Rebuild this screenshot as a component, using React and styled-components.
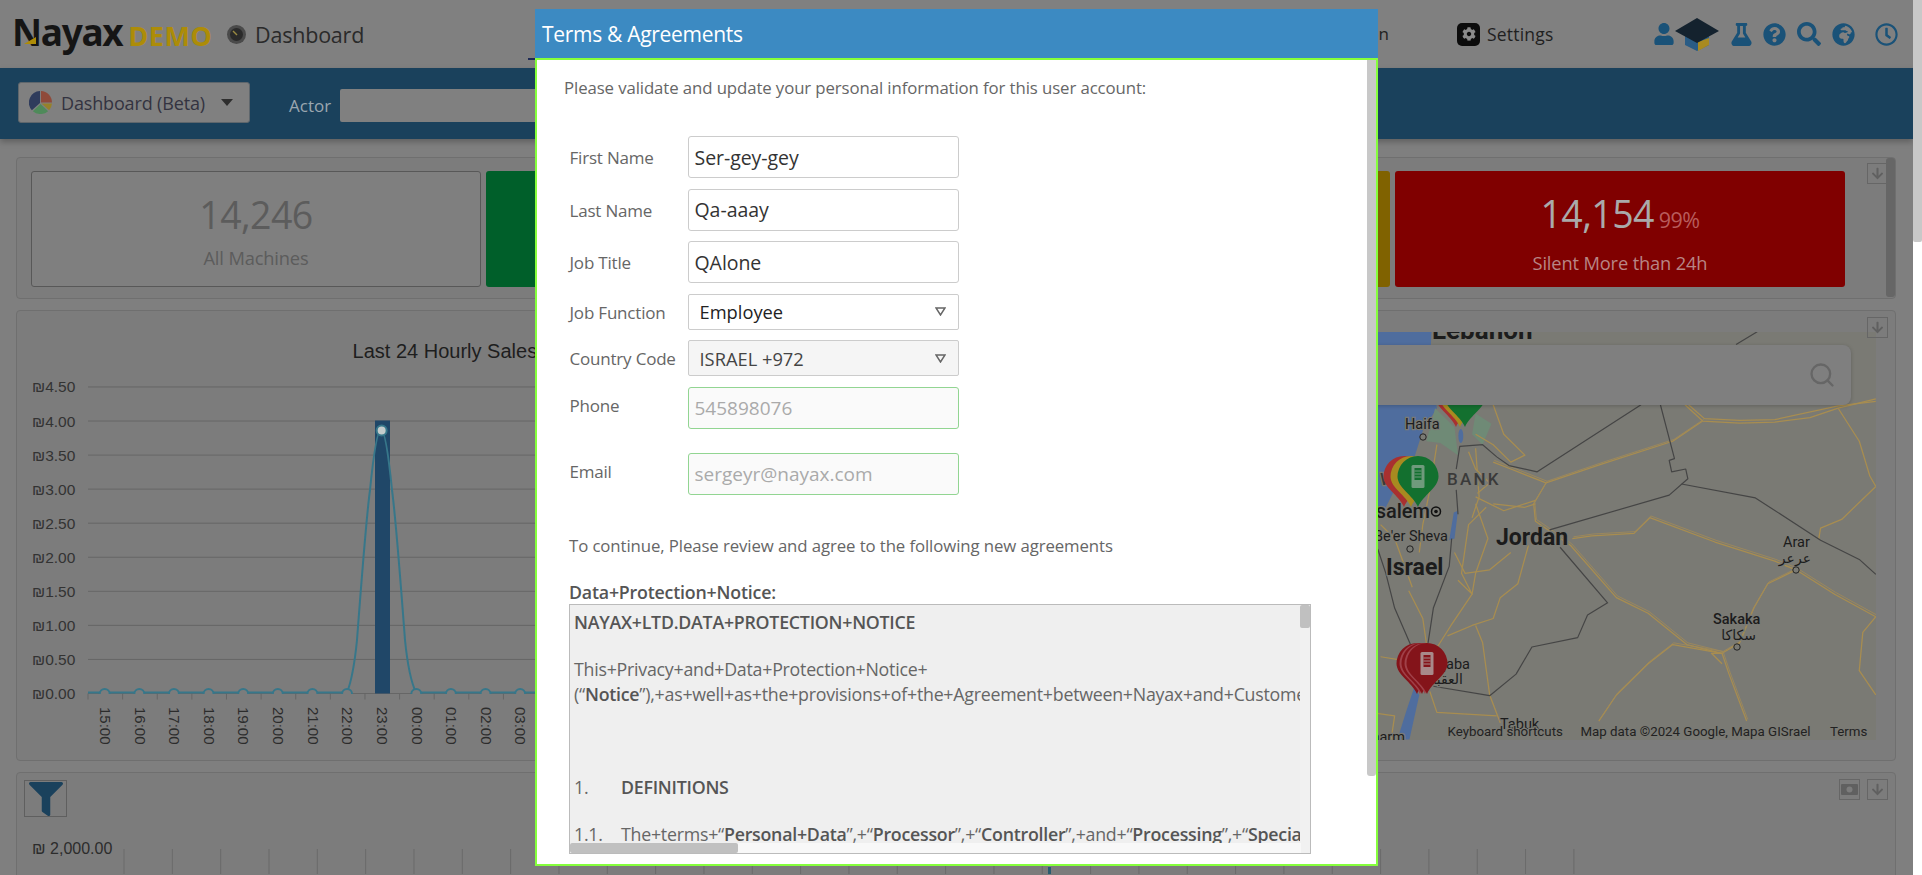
import styled, { createGlobalStyle } from "styled-components";
import {
  FaUser,
  FaFlask,
  FaQuestionCircle,
  FaSearch,
  FaGlobeAfrica,
  FaRegClock,
  FaCog,
  FaArrowDown,
  FaFilter,
} from "react-icons/fa";
import { Search } from "lucide-react";

const UI_FONT = `"Open Sans", "Noto Sans", sans-serif`;
const CHART_FONT = `"Liberation Sans", "DejaVu Sans", sans-serif`;
const MAP_FONT = `Roboto, "DejaVu Sans", sans-serif`;

const GlobalStyle = createGlobalStyle`
  html, body {
    margin: 0;
    height: 875px;
    overflow: hidden;
    background: #fff;
  }
  * { box-sizing: border-box; }
`;

const Shell = styled.div`
  display: flex;
  width: 1922px;
  height: 875px;
  overflow: hidden;
  font-family: ${UI_FONT};
`;

const Page = styled.div`
  position: relative;
  width: 1913px;
  height: 875px;
  background: #7f7f7f;
  overflow: hidden;
`;

const PageScrollbar = styled.div`
  width: 9px;
  height: 875px;
  background: #fff;
`;

const PageThumb = styled.div`
  height: 242px;
  background: #c8c8c8;
  border-radius: 0 0 2px 2px;
`;

/* header */
const Header = styled.header`
  display: flex;
  align-items: center;
  height: 68px;
  padding-left: 12px;
  background: #808080;
`;

const Brand = styled.div`
  position: relative;
  display: flex;
  align-items: baseline;
  width: 215px;
  height: 40px;
  margin-top: -4px;
`;

const BrandName = styled.span`
  font-family: "Noto Sans", sans-serif;
  font-size: 37px;
  line-height: 40px;
  font-weight: 700;
  letter-spacing: -1.3px;
  color: #151515;
`;

const BrandDemo = styled.span`
  margin-left: 6px;
  font-family: "Noto Sans", sans-serif;
  font-size: 27px;
  line-height: 40px;
  font-weight: 700;
  letter-spacing: 0.6px;
  color: #ad8c08;
`;

const BrandMark = styled.svg`
  position: absolute;
  left: 12px;
  top: 25px;
`;

const PageTitle = styled.div`
  display: flex;
  align-items: center;
  gap: 9px;
  width: 301px;
  font-size: 21.5px;
  letter-spacing: -0.2px;
  color: #2a2a2a;
`;

const NavTab = styled.div`
  display: flex;
  align-items: center;
  justify-content: flex-end;
  flex: none;
  height: 60px;
  width: ${(p) => p.$width}px;
  margin-top: -8px;
  padding-top: 8px;
  border-bottom: 2px solid ${(p) => (p.$active ? "#1d2a55" : "transparent")};
  font-size: 17px;
  color: #222;
`;

const SettingsLink = styled.div`
  display: flex;
  align-items: center;
  gap: 7px;
  margin-left: 68px;
  font-size: 17.5px;
  letter-spacing: 0.2px;
  color: #1f1f1f;
`;

const SettingsIcon = styled.span`
  display: flex;
  align-items: center;
  justify-content: center;
  width: 23px;
  height: 23px;
  border-radius: 5px;
  background: #0c0c0c;
  color: #8a8a8a;
  font-size: 14px;
`;

const HeaderIcons = styled.div`
  display: flex;
  align-items: center;
  margin-left: 99px;
  color: #1a5278;
`;

const HeaderIcon = styled.span`
  display: flex;
  font-size: ${(p) => p.$size}px;
  margin-left: ${(p) => p.$gap}px;
`;

/* blue toolbar */
const Toolbar = styled.div`
  display: flex;
  align-items: center;
  height: 71px;
  padding: 0 0 2px 18px;
  background: #1a415c;
  box-shadow: 0 3px 6px rgba(0, 0, 0, 0.25);
`;

const ViewSelect = styled.div`
  display: flex;
  align-items: center;
  width: 232px;
  height: 41px;
  padding-left: 10px;
  background: #808080;
  border: 1px solid #5e666c;
  border-radius: 3px;
  font-size: 18px;
  letter-spacing: -0.15px;
  color: #333340;
`;

const ViewLabel = styled.span`
  margin-left: 9px;
  flex: 1;
`;

const Caret = styled.span`
  width: 0;
  height: 0;
  margin-right: 16px;
  border-left: 6px solid transparent;
  border-right: 6px solid transparent;
  border-top: 7px solid #2e2e2e;
`;

const ActorLabel = styled.span`
  margin: 6px 0 0 39px;
  font-size: 17px;
  color: #9aa7b0;
`;

const ActorInput = styled.div`
  width: 260px;
  height: 33px;
  margin: 5px 0 0 9px;
  background: #808080;
  border-radius: 2px;
`;

/* dashboard panels */
const Main = styled.main`
  display: flex;
  flex-direction: column;
  gap: 11px;
  padding: 18px 17px 0 16px;
`;

const Panel = styled.section`
  position: relative;
  flex: none;
  height: ${(p) => p.$height}px;
  background: #7c7c7c;
  border: 1px solid #6f6f6f;
  border-radius: 4px;
`;

const StatPanel = styled(Panel)`
  display: grid;
  grid-template-columns: repeat(4, 450px);
  column-gap: 4.67px;
  padding: 13px 0 0 14px;
`;

const StatCard = styled.div`
  display: flex;
  flex-direction: column;
  align-items: center;
  height: 116px;
  padding-top: 20px;
  background: ${(p) => p.$bg};
  border: ${(p) => (p.$outlined ? "1px solid #585858" : "none")};
  border-radius: 3px;
`;

const StatValue = styled.div`
  font-size: 37.5px;
  line-height: 46px;
  letter-spacing: -0.6px;
  color: ${(p) => p.$color};
`;

const StatPercent = styled.span`
  margin-left: 5px;
  font-size: 21.5px;
  color: #b85c5c;
`;

const StatLabel = styled.div`
  margin-top: 8px;
  font-size: 18.3px;
  line-height: 24px;
  letter-spacing: -0.15px;
  color: ${(p) => p.$color};
`;

const PanelScrollbar = styled.div`
  position: absolute;
  top: 0;
  bottom: 1px;
  right: 0;
  width: 9px;
  background: #666;
  border-radius: 3px;
`;

const IconButton = styled.div`
  position: absolute;
  top: ${(p) => p.$top}px;
  right: ${(p) => p.$right}px;
  display: flex;
  align-items: center;
  justify-content: center;
  width: 21px;
  height: 21px;
  border: 1px solid #666;
  color: #606060;
  font-size: 13px;
`;

const ChartPanel = styled(Panel)`
  display: flex;
`;

const ChartSvg = styled.svg`
  display: block;
  flex: none;
`;

const ChartText = styled.text`
  font-family: ${CHART_FONT};
  font-size: ${(p) => p.$size}px;
  fill: ${(p) => p.$color};
`;

const MapCell = styled.div`
  position: relative;
  flex: none;
  width: 916px;
  height: 408px;
  margin-top: 21px;
  overflow: hidden;
  background: #7a7a74;
`;

const MapSvg = styled.svg`
  display: block;
`;

const MapLabel = styled.text`
  font-family: ${MAP_FONT};
  font-size: ${(p) => p.$size}px;
  font-weight: ${(p) => p.$weight || 400};
  letter-spacing: ${(p) => p.$spacing || 0}px;
  fill: ${(p) => p.$color || "#1c1c1c"};
  stroke: #7a7a74;
  stroke-width: 2.5px;
  paint-order: stroke;
`;

const MapSearch = styled.div`
  position: absolute;
  top: 13px;
  right: 25px;
  display: flex;
  align-items: center;
  justify-content: flex-end;
  width: 560px;
  height: 60px;
  padding-right: 15px;
  background: #7f7f7f;
  border-radius: 8px;
  box-shadow: 0 1px 4px rgba(0, 0, 0, 0.2);
  color: #666;
`;

const FilterButton = styled.div`
  display: flex;
  align-items: center;
  justify-content: center;
  width: 43px;
  height: 37px;
  margin: 7px 0 0 7px;
  border: 1px solid #5f5f5f;
  color: #1a415c;
  font-size: 34px;
`;

/* modal */
const Modal = styled.div`
  position: absolute;
  left: 535px;
  top: 9px;
  width: 843px;
  height: 857px;
`;

const ModalHeader = styled.div`
  display: flex;
  align-items: center;
  height: 49px;
  padding-left: 7px;
  background: #3c8ac2;
  font-size: 21px;
  letter-spacing: -0.3px;
  color: #fff;
`;

const ModalBody = styled.div`
  position: relative;
  height: 808px;
  padding: 16px 0 0 27px;
  background: #fff;
  border: 2px solid #86ff3c;
  overflow: hidden;
  font-size: 16.8px;
  color: #666;
`;

const ModalThumb = styled.div`
  position: absolute;
  top: 0;
  right: 0;
  width: 9px;
  height: 716px;
  background: #c8c8c8;
  border-radius: 0 0 3px 3px;
`;

const BodyText = styled.div`
  height: 24px;
  line-height: 24px;
  letter-spacing: -0.1px;
  margin: ${(p) => p.$margin || "0"};
  white-space: nowrap;
`;

const Form = styled.div`
  display: flex;
  flex-direction: column;
  gap: 10.5px;
  margin: 36px 0 0 5.5px;
`;

const FormRow = styled.div`
  display: grid;
  grid-template-columns: 118px 271px;
  align-items: ${(p) => (p.$top ? "start" : "center")};
  margin-top: ${(p) => p.$offset || 0}px;
`;

const FieldLabel = styled.label`
  font-size: 17px;
  letter-spacing: -0.2px;
  line-height: 24px;
  padding-top: ${(p) => p.$pad || 2}px;
`;

const Field = styled.div`
  display: flex;
  align-items: center;
  justify-content: space-between;
  height: 42px;
  padding: 0 6px;
  background: #fff;
  border: 1px solid #ccc;
  border-radius: 3px;
  font-size: 19.5px;
  letter-spacing: -0.05px;
  color: #333;
`;

const LockedField = styled(Field)`
  background: #fafafa;
  border-color: #92d592;
  font-size: 19px;
  letter-spacing: 0;
  color: #aaa;
`;

const SelectField = styled(Field)`
  height: 36px;
  padding: 0 12px 0 11px;
  border-radius: 2px;
  background: ${(p) => (p.$disabled ? "#f5f5f5" : "#fff")};
  font-size: 18.3px;
  letter-spacing: 0;
  color: ${(p) => (p.$disabled ? "#444" : "#222")};
`;

const AgreementTitle = styled.div`
  height: 23px;
  line-height: 23px;
  margin: 23px 0 0 5px;
  font-size: 17.8px;
  font-weight: 600;
  letter-spacing: -0.2px;
  color: #555;
`;

const AgreementBox = styled.div`
  position: relative;
  width: 742px;
  height: 250px;
  margin-left: 5px;
  background: #efefef;
  border: 1px solid #bbb;
  overflow: hidden;
`;

const AgreementText = styled.div`
  width: 731px;
  height: 239px;
  padding: 5px 0 0 4px;
  overflow: hidden;
  white-space: nowrap;
  line-height: 25px;
  letter-spacing: -0.25px;
  font-size: 17.8px;
`;

const Para = styled.div`
  margin-bottom: ${(p) => p.$gap || 0}px;
`;

const Num = styled.span`
  display: inline-block;
  width: 47px;
`;

const Strong = styled.b`
  font-weight: 600;
  color: #555;
`;

const TrackV = styled.div`
  position: absolute;
  top: 0;
  right: 0;
  width: 10px;
  height: 100%;
  background: #f1f1f1;
`;

const ThumbV = styled.div`
  width: 100%;
  height: 23px;
  background: #c0c0c0;
  border-radius: 2px;
`;

const TrackH = styled.div`
  position: absolute;
  left: 0;
  bottom: 0;
  width: 731px;
  height: 10px;
  background: #f8f8f8;
`;

const ThumbH = styled.div`
  width: 168px;
  height: 100%;
  background: #c0c0c0;
  border-radius: 2px;
`;

const HOURS = ["15", "16", "17", "18", "19", "20", "21", "22", "23", "00", "01", "02", "03", "04", "05", "06", "07", "08", "09", "10", "11", "12", "13", "14"];
const PRICES = ["0.00", "0.50", "1.00", "1.50", "2.00", "2.50", "3.00", "3.50", "4.00", "4.50"];

const HourlyChart = () => {
  const base = 693.5;
  const stepY = 34.06;
  const stepX = 34.62;
  return (
    <ChartSvg width="943" height="449" viewBox="17 311 943 449">
      <defs>
        <clipPath id="plot">
          <rect x="80" y="380" width="880" height="314" />
        </clipPath>
      </defs>
      <ChartText x="352.6" y="358" $size={20} $color="#1e1e1e">
        Last 24 Hourly Sales
      </ChartText>
      {PRICES.map((v, i) => (
        <g key={v}>
          <line x1="88" x2="950" y1={base - i * stepY} y2={base - i * stepY} stroke="#666" />
          <ChartText x="32" y={base - i * stepY + 5.5} $size={15.5} $color="#333">
            ₪{v}
          </ChartText>
        </g>
      ))}
      {HOURS.map((h, i) => (
        <g key={h}>
          <line x1={88 + i * stepX} x2={88 + i * stepX} y1={base} y2={base + 6} stroke="#666" />
          <ChartText
            $size={15}
            $color="#2c2c2c"
            transform={`translate(${105 + i * stepX - 5} 707) rotate(90)`}
          >
            {h}:00
          </ChartText>
        </g>
      ))}
      <rect x="375" y="420.5" width="15" height="273" fill="#204768" />
      <g clipPath="url(#plot)">
        <path
          d="M88 692.5 H347 C352 680 355 660 357 640 C360 600 366 520 370 490 C373 460 377 430 381 430 C385 430 389 460 392 490 C396 520 402 600 405 640 C407 660 410 680 416 692.5 H950"
          fill="none"
          stroke="#37778a"
          strokeWidth="2"
        />
        {HOURS.map((h, i) => (
          <circle
            key={h}
            cx={104.7 + i * stepX}
            cy={i === 8 ? 430.4 : 694}
            r="5"
            fill={i === 8 ? "#c4cccc" : "#7c7c7c"}
            stroke="#37778a"
            strokeWidth="2"
          />
        ))}
      </g>
    </ChartSvg>
  );
};

const Pin = ({ x, top, fill, light }) => {
  const tip = top + 51;
  return (
    <g>
      <path
        d={`M${x} ${tip} C${x - 5} ${tip - 12} ${x - 20.5} ${top + 32} ${x - 20.5} ${top + 20.5} A20.5 20.5 0 1 1 ${x + 20.5} ${top + 20.5} C${x + 20.5} ${top + 32} ${x + 5} ${tip - 12} ${x} ${tip} Z`}
        fill={fill}
      />
      {light && (
        <g>
          <rect x={x - 6.5} y={top + 9} width="13" height="23" rx="1.5" fill={light} />
          <rect x={x - 3.5} y={top + 12} width="7" height="12" fill={fill} />
          <path d={`M${x - 3.5} ${top + 15} h7 M${x - 3.5} ${top + 18} h7 M${x - 3.5} ${top + 21} h7`} stroke={light} strokeWidth="1" />
        </g>
      )}
    </g>
  );
};

const ROADS = [
  "M895 215 L945 262 L1050 268 L1150 265 L1250 252 L1330 225 L1437 198",
  "M905 215 L950 255 L1050 260 L1150 258 L1330 218 L1437 205",
  "M945 262 L860 320 L660 385 L500 440 L400 400 L350 380",
  "M500 440 L465 500 L470 550 L570 620 L700 770 L790 815 L900 905 L1000 930 L1020 990 L1070 1125",
  "M575 600 L630 592 L750 585 L795 540 L980 610 L1150 665 L1210 690 L1320 760 L1437 825",
  "M1210 690 L1130 730 L1090 800 L1050 900 L1000 930 L860 905 L790 960 L700 1050 L650 1125",
  "M1275 600 L1280 570 L1340 545 L1437 450",
  "M300 480 L380 520 L470 490",
  "M300 500 L335 600 L300 700 L290 760 L230 850 L180 930",
  "M450 620 L420 730 L370 770 L350 830 L290 850 L220 880",
  "M300 850 L320 900 L340 1050 L370 1130",
  "M250 720 L290 760 L260 700 L280 560 L330 510",
  "M110 750 L150 830 L160 900",
  "M170 1040 L190 1100 L360 1110",
  "M60 1178 L70 1110 L0 1100",
  "M350 215 L380 300 L440 360 L400 380 L350 330 L300 300",
  "M1330 225 L1390 320 L1420 420 L1437 450",
  "M1437 825 L1400 870 L1390 980 L1437 1050",
  "M190 330 L170 460 L150 560 L140 640",
  "M300 340 L310 480 L290 540",
  "M1000 930 L970 930 L1000 960",
  "M30 940 L90 950",
  "M305 470 L340 440 L300 400 L280 350",
  "M240 640 L270 700 L340 690 L400 640",
  "M30 560 L70 600 L120 740",
  "M350 500 L440 510 L470 500",
];

const BORDERS = [
  "M1100 5 L1040 42",
  "M770 215 L475 408 L395 390 L360 365 L320 330 L255 335 L245 400",
  "M825 215 L865 370 L850 375 L857 408 L897 400 L903 428 L850 475 L510 575",
  "M885 443 L1095 483 L1280 605 L1390 660 L1437 703",
  "M540 625 L675 785 L618 820 L590 885 L460 912 L415 990 L340 1052 L180 1025",
  "M22 630 L45 700 L70 800 L115 905",
  "M245 460 L250 530 M232 600 L225 680 L180 800 L165 900",
];

const MapView = () => (
  <MapCell>
    <MapSvg width="916" height="408" viewBox="960 332 916 408">
      <rect x="960" y="332" width="916" height="408" fill="#7a7a74" />
      <g transform="translate(1370 330) scale(0.352 0.3476)">
        <path d="M0 0 L175 0 L170 100 L190 225 L150 290 L125 370 L85 430 L40 520 L0 560 Z" fill="#4f6d9e" />
        <path d="M185 225 L240 280 L250 360 L200 325 L160 320 Z M300 240 L345 270 L320 330 L290 300 Z" fill="#6f8a76" />
        <ellipse cx="258" cy="305" rx="7" ry="20" fill="#4f6d9e" />
        <path d="M238 525 L250 520 L240 600 L225 605 Z" fill="#4f6d9e" />
        <path d="M125 1030 L140 1050 L112 1178 L78 1178 L105 1090 Z" fill="#4f6d9e" />
        {ROADS.map((d) => (
          <path key={d} d={d} fill="none" stroke="#a88d50" strokeWidth="3.6" strokeLinejoin="round" />
        ))}
        {ROADS.slice(2, 6).map((d) => (
          <path key={d} d={d} transform="translate(3 -5)" fill="none" stroke="#a08a58" strokeWidth="2.4" strokeLinejoin="round" />
        ))}
        {BORDERS.map((d) => (
          <path key={d} d={d} fill="none" stroke="#454545" strokeWidth="3.4" strokeLinejoin="round" />
        ))}
      </g>

      <MapLabel x="1432" y="339" $size={26} $weight={700}>Lebanon</MapLabel>
      <MapLabel x="1405" y="429" $size={14.5}>Haifa</MapLabel>
      <MapLabel x="1447" y="485" $size={17} $weight={500} $spacing={2.2} $color="#3a3a3a">BANK</MapLabel>
      <MapLabel x="1380" y="485" $size={17} $weight={500} $color="#3a3a3a">W</MapLabel>
      <MapLabel x="1430" y="518" $size={20} $weight={500} textAnchor="end">Jerusalem</MapLabel>
      <MapLabel x="1448" y="541" $size={14.5} textAnchor="end">Be'er Sheva</MapLabel>
      <MapLabel x="1386" y="575" $size={23} $weight={700}>Israel</MapLabel>
      <MapLabel x="1496" y="545" $size={23} $weight={700}>Jordan</MapLabel>
      <MapLabel x="1783" y="547" $size={14.5}>Arar</MapLabel>
      <MapLabel x="1811" y="563" $size={14} textAnchor="end">عرعر</MapLabel>
      <MapLabel x="1713" y="624" $size={14.5} $weight={500}>Sakaka</MapLabel>
      <MapLabel x="1756" y="640" $size={14} textAnchor="end">سكاكا</MapLabel>
      <MapLabel x="1470" y="669" $size={14.5} textAnchor="end">Aqaba</MapLabel>
      <MapLabel x="1463" y="684" $size={14} textAnchor="end">العقبة</MapLabel>
      <MapLabel x="1500" y="729" $size={14.5}>Tabuk</MapLabel>
      <MapLabel x="1405" y="742" $size={14.5} textAnchor="end">Sharm</MapLabel>

      <circle cx="1423" cy="437" r="3.2" fill="#7a7a74" stroke="#222" />
      <circle cx="1436" cy="511.5" r="4.5" fill="#7a7a74" stroke="#111" strokeWidth="1.5" />
      <circle cx="1436" cy="511.5" r="1.8" fill="#111" />
      <circle cx="1410" cy="549" r="3.2" fill="#7a7a74" stroke="#222" />
      <circle cx="1796" cy="570" r="3.2" fill="#7a7a74" stroke="#222" />
      <circle cx="1737" cy="647" r="3.2" fill="#7a7a74" stroke="#222" />

      <Pin x={1456} top={376} fill="#a83030" />
      <Pin x={1460} top={376} fill="#a88a20" />
      <Pin x={1465} top={376} fill="#13702f" />
      <Pin x={1404} top={456} fill="#a83030" />
      <Pin x={1411} top={456} fill="#a88a20" />
      <Pin x={1418} top={456} fill="#13702f" light="#6f9a7c" />
      <Pin x={1417} top={643} fill="#84141a" />
      <Pin x={1420} top={643} fill="#a04048" />
      <Pin x={1422} top={643} fill="#84141a" />
      <Pin x={1425} top={643} fill="#a04048" />
      <Pin x={1427} top={643} fill="#84141a" light="#a8898a" />

      <MapLabel x="1447.5" y="735.5" $size={13.3} $color="#222">Keyboard shortcuts</MapLabel>
      <MapLabel x="1580.5" y="735.5" $size={13.3} $color="#222">Map data ©2024 Google, Mapa GISrael</MapLabel>
      <MapLabel x="1830" y="735.5" $size={13.3} $color="#222">Terms</MapLabel>
    </MapSvg>
    <MapSearch>
      <Search size={28} strokeWidth={2} />
    </MapSearch>
  </MapCell>
);

const SalesStrip = () => {
  const lines = Array.from({ length: 31 }, (_, i) => 124 + i * 48.33);
  return (
    <ChartSvg width="1878" height="57" viewBox="17 818 1878 57">
      <ChartText x="32" y="855" $size={16} $color="#2c2c2c">
        ₪ 2,000.00
      </ChartText>
      {lines.map((x) => (
        <line key={x} x1={x} x2={x} y1="850" y2="875" stroke="#6a6a6a" />
      ))}
      <rect x="1048" y="868" width="3" height="7" fill="#2a5c70" />
    </ChartSvg>
  );
};

const GaugeIcon = () => (
  <svg width="19" height="19" viewBox="0 0 19 19">
    <circle cx="9.5" cy="9.5" r="9.5" fill="#4a4a4a" />
    <circle cx="9.5" cy="9.5" r="6.5" fill="#2a2a2a" />
    <path d="M6 6 L10 10" stroke="#9a8a40" strokeWidth="1.4" />
  </svg>
);

const PieIcon = () => (
  <svg width="23" height="23" viewBox="0 0 24 24">
    <path d="M12.5 0 A12 12 0 0 1 24 12 L12.5 12 Z" fill="#8f4a3a" />
    <path d="M24 13 A12 12 0 0 1 21 20 L13 13 Z" fill="#96812a" />
    <path d="M20 21 A12 12 0 0 1 4 21 L12 13.5 Z" fill="#4f8a5a" />
    <path d="M11.5 0 L11.5 12.5 L3 20 A12 12 0 0 1 11.5 0 Z" fill="#2f3c5c" />
  </svg>
);

const GradCap = () => (
  <svg width="44" height="33" viewBox="0 0 44 33">
    <path d="M10 15 V27 L22 33 L34 27 V15 Z" fill="#2a5c85" />
    <path d="M23 24 L34 20 V27 L23 33 Z" fill="#a98a20" />
    <path d="M22 0 L44 13 L22 25 L0 13 Z" fill="#14222e" />
  </svg>
);

const SelectArrow = () => (
  <svg width="11" height="9" viewBox="0 0 11 9">
    <path d="M1 1 H10 L5.5 8 Z" fill="none" stroke="#666" strokeWidth="1.5" />
  </svg>
);

const App = () => (
  <Shell>
    <GlobalStyle />
    <Page>
      <Header>
        <Brand>
          <BrandName>Nayax</BrandName>
          <BrandDemo>DEMO</BrandDemo>
          <BrandMark width="12" height="7" viewBox="0 0 12 7">
            <path d="M0 7 L12 0 V7 Z" fill="#ad8c08" />
          </BrandMark>
        </Brand>
        <PageTitle>
          <GaugeIcon />
          Dashboard
        </PageTitle>
        <NavTab $width={30} $active />
        <NavTab $width={831}>Administration</NavTab>
        <SettingsLink>
          <SettingsIcon>
            <FaCog />
          </SettingsIcon>
          Settings
        </SettingsLink>
        <HeaderIcons>
          <HeaderIcon $size={22} $gap={0}>
            <FaUser />
          </HeaderIcon>
          <HeaderIcon $size={33} $gap={0}>
            <GradCap />
          </HeaderIcon>
          <HeaderIcon $size={23} $gap={11}>
            <FaFlask />
          </HeaderIcon>
          <HeaderIcon $size={23} $gap={10}>
            <FaQuestionCircle />
          </HeaderIcon>
          <HeaderIcon $size={24} $gap={11}>
            <FaSearch />
          </HeaderIcon>
          <HeaderIcon $size={23} $gap={11}>
            <FaGlobeAfrica />
          </HeaderIcon>
          <HeaderIcon $size={23} $gap={20}>
            <FaRegClock />
          </HeaderIcon>
        </HeaderIcons>
      </Header>

      <Toolbar>
        <ViewSelect>
          <PieIcon />
          <ViewLabel>Dashboard (Beta)</ViewLabel>
          <Caret />
        </ViewSelect>
        <ActorLabel>Actor</ActorLabel>
        <ActorInput />
      </Toolbar>

      <Main>
        <StatPanel $height={142}>
          <StatCard $bg="#7f7f7f" $outlined>
            <StatValue $color="#5c5c5c">14,246</StatValue>
            <StatLabel $color="#5c5c5c">All Machines</StatLabel>
          </StatCard>
          <StatCard $bg="#005f2a" />
          <StatCard $bg="#806200" />
          <StatCard $bg="#800000">
            <StatValue $color="#aaa">
              14,154
              <StatPercent>99%</StatPercent>
            </StatValue>
            <StatLabel $color="#b88585">Silent More than 24h</StatLabel>
          </StatCard>
          <PanelScrollbar />
          <IconButton $top={5} $right={7}>
            <FaArrowDown />
          </IconButton>
        </StatPanel>

        <ChartPanel $height={451}>
          <HourlyChart />
          <MapView />
          <IconButton $top={6} $right={7}>
            <FaArrowDown />
          </IconButton>
        </ChartPanel>

        <Panel $height={110}>
          <FilterButton>
            <FaFilter />
          </FilterButton>
          <SalesStrip />
          <IconButton $top={6} $right={35}>
            <svg width="17" height="11" viewBox="0 0 17 11">
              <rect width="17" height="11" rx="1" fill="#606060" />
              <circle cx="8.5" cy="5.5" r="3" fill="#7c7c7c" />
            </svg>
          </IconButton>
          <IconButton $top={6} $right={7}>
            <FaArrowDown />
          </IconButton>
        </Panel>
      </Main>

      <Modal>
        <ModalHeader>Terms &amp; Agreements</ModalHeader>
        <ModalBody>
          <BodyText>Please validate and update your personal information for this user account:</BodyText>
          <Form>
            <FormRow>
              <FieldLabel>First Name</FieldLabel>
              <Field>Ser-gey-gey</Field>
            </FormRow>
            <FormRow>
              <FieldLabel>Last Name</FieldLabel>
              <Field>Qa-aaay</Field>
            </FormRow>
            <FormRow>
              <FieldLabel>Job Title</FieldLabel>
              <Field>QAlone</Field>
            </FormRow>
            <FormRow>
              <FieldLabel>Job Function</FieldLabel>
              <SelectField>
                Employee
                <SelectArrow />
              </SelectField>
            </FormRow>
            <FormRow>
              <FieldLabel>Country Code</FieldLabel>
              <SelectField $disabled>
                ISRAEL +972
                <SelectArrow />
              </SelectField>
            </FormRow>
            <FormRow $top>
              <FieldLabel $pad={7}>Phone</FieldLabel>
              <LockedField>545898076</LockedField>
            </FormRow>
            <FormRow $top $offset={13.5}>
              <FieldLabel $pad={7}>Email</FieldLabel>
              <LockedField>sergeyr@nayax.com</LockedField>
            </FormRow>
          </Form>
          <BodyText $margin="39px 0 0 5px">
            To continue, Please review and agree to the following new agreements
          </BodyText>
          <AgreementTitle>Data+Protection+Notice:</AgreementTitle>
          <AgreementBox>
            <AgreementText>
              <Para $gap={22}>
                <Strong>NAYAX+LTD.DATA+PROTECTION+NOTICE</Strong>
              </Para>
              <Para>This+Privacy+and+Data+Protection+Notice+</Para>
              <Para $gap={68}>
                (“<Strong>Notice</Strong>”),+as+well+as+the+provisions+of+the+Agreement+between+Nayax+and+Customer+with+regard
              </Para>
              <Para $gap={22}>
                <Num>1.</Num>
                <Strong>DEFINITIONS</Strong>
              </Para>
              <Para>
                <Num>1.1.</Num>
                The+terms+“<Strong>Personal+Data</Strong>”,+“<Strong>Processor</Strong>”,+“<Strong>Controller</Strong>”,+and+“<Strong>Processing</Strong>”,+“<Strong>Special+Categories</Strong>”
              </Para>
            </AgreementText>
            <TrackV>
              <ThumbV />
            </TrackV>
            <TrackH>
              <ThumbH />
            </TrackH>
          </AgreementBox>
          <ModalThumb />
        </ModalBody>
      </Modal>
    </Page>
    <PageScrollbar>
      <PageThumb />
    </PageScrollbar>
  </Shell>
);

export default App;
